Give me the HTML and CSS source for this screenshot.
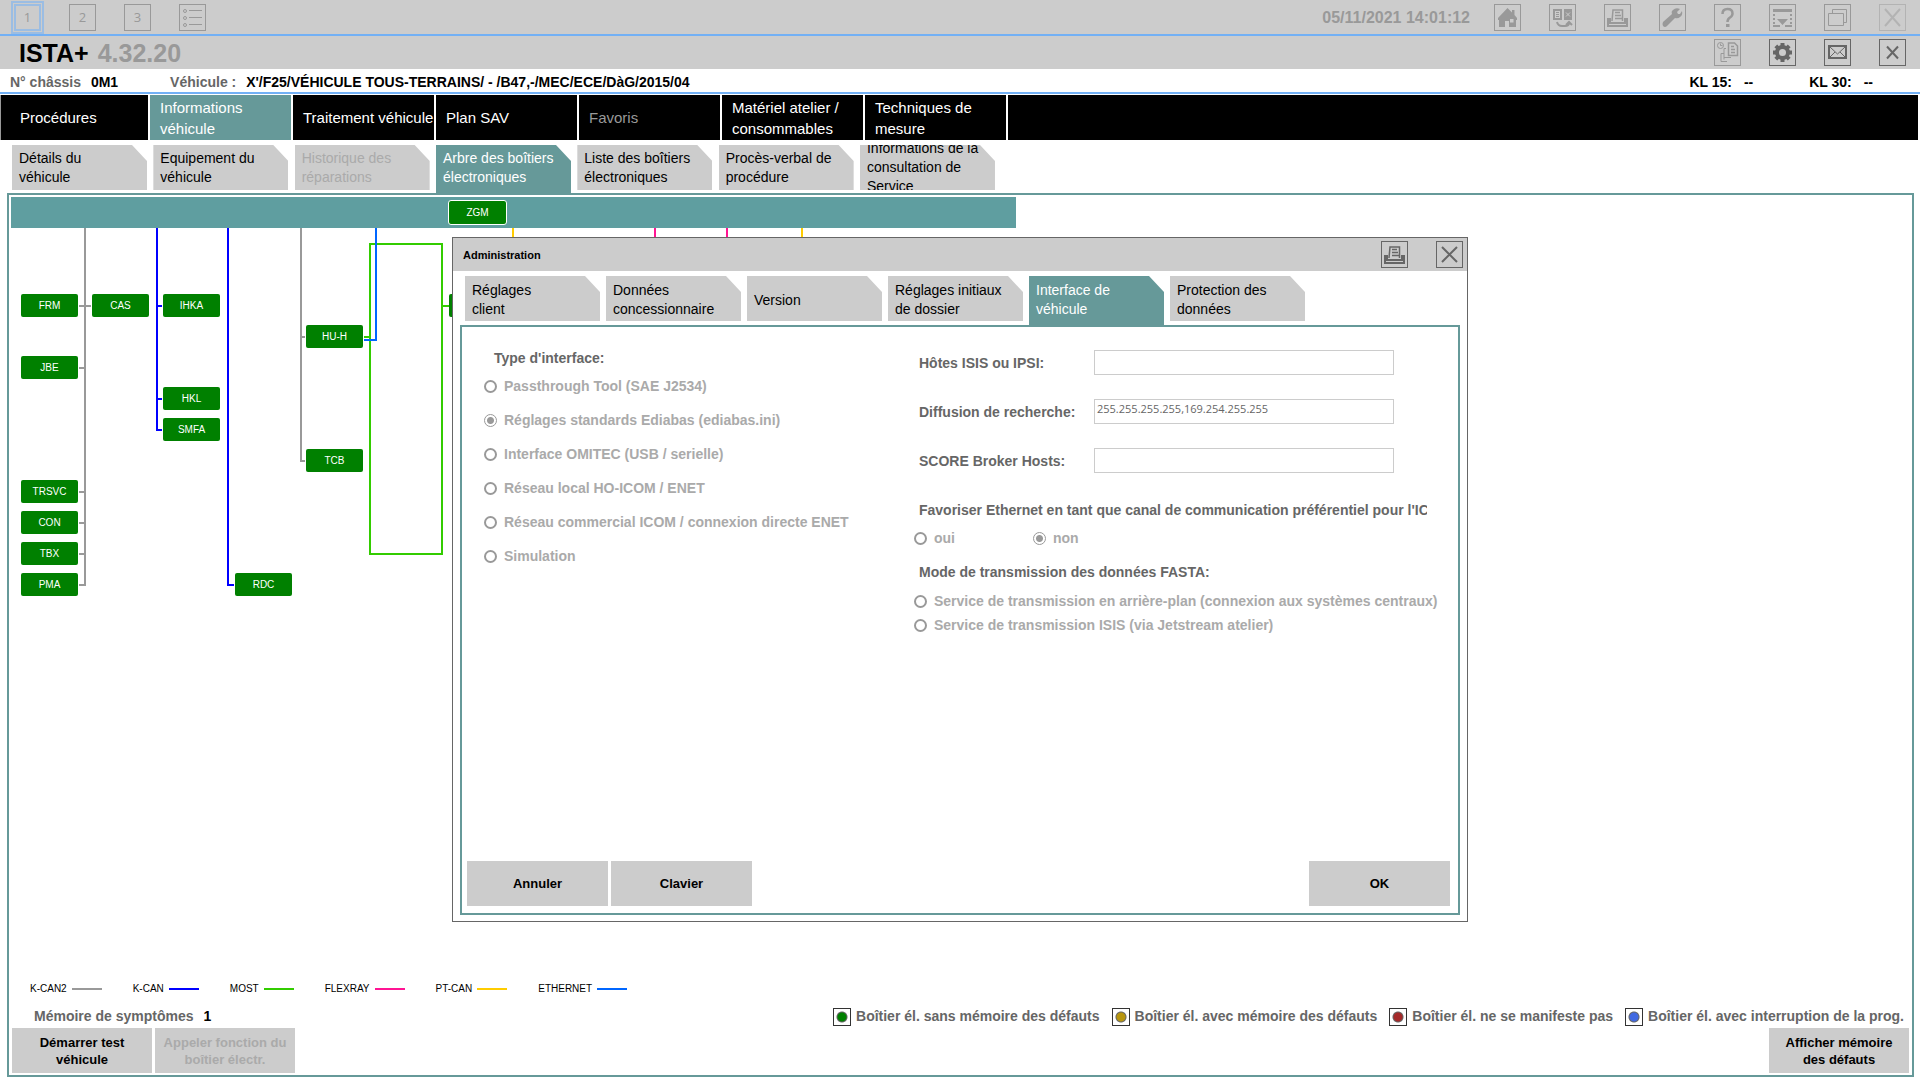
FILE: index.html
```html
<!DOCTYPE html>
<html lang="fr">
<head>
<meta charset="utf-8">
<title>ISTA+ 4.32.20</title>
<link rel="stylesheet" href="styles.css">
</head>
<body>
<header class="topbar">
  <div class="session-slots">
    <button class="icon-button slot slot-active" type="button">1</button>
    <button class="icon-button slot" type="button">2</button>
    <button class="icon-button slot" type="button">3</button>
    <button class="icon-button" type="button" aria-label="Liste">
      <svg viewBox="0 0 27 27"><g fill="none" stroke="currentColor"><circle cx="6" cy="7" r="1.5"/><circle cx="6" cy="14" r="1.5"/><circle cx="6" cy="21" r="1.5"/><path d="M10 6.500H23M10 13.500H23M10 20.500H23"/></g></svg>
    </button>
  </div>
  <div class="tools">
    <time class="clock" datetime="2021-11-05T14:01:12">05/11/2021 14:01:12</time>
    <div class="tool-icons">
      <button class="icon-button" type="button" aria-label="Accueil">
        <svg viewBox="0 0 27 27"><path fill="currentColor" fill-rule="evenodd" d="M13.500 4L18 8.500V6h2.500v5L23 14v2h-1v7h-7v-6h-4v6H5v-7H4v-2zM16 15v3.500h3.500V15z"/></svg>
      </button>
      <button class="icon-button" type="button" aria-label="Échange">
        <svg viewBox="0 0 27 27"><path fill="currentColor" d="M15 5h8v11h-8z"/><path fill="none" stroke="currentColor" stroke-width="2" d="M5 6h7v9H5z"/><path fill="none" stroke="currentColor" d="M7 8.500h3M7 10.500h3M7 12.500h3"/><path fill="none" stroke="#ccc" d="M17 8.500l4 4m0-4l-4 4"/><path fill="none" stroke="currentColor" stroke-width="2" d="M8 18q1 4 5 4h3q4 0 4-3M17 21l3-3 3 3"/></svg>
      </button>
      <button class="icon-button" type="button" aria-label="Imprimer">
        <svg viewBox="0 0 27 27"><path fill="currentColor" d="M3 14h4v4h13v-4h4v9H3z"/><path fill="none" stroke="currentColor" stroke-width="1.500" d="M8 17l1-11h9.500v11M11 8.500h5M11 11.500h6M11 14.500h7"/><path stroke="#ccc" d="M5 20.500h17"/></svg>
      </button>
      <button class="icon-button" type="button" aria-label="Réglages">
        <svg viewBox="0 0 27 27"><path fill="currentColor" d="M22 5l-3 3 1 2 2 0 2-3q1 4-2 6-2 2-5 1l-8 8q-2 2-4 0-1-2 0-4l9-8q-1-3 1-4 3-3 7-1z" transform="translate(-1)"/></svg>
      </button>
      <button class="icon-button" type="button" aria-label="Aide">
        <svg viewBox="0 0 27 27"><path fill="none" stroke="currentColor" stroke-width="2.500" d="M8.500 10q0-5 5-5t5 4.500q0 2.500-2.500 4-2.500 1.500-2.500 4.500"/><path fill="currentColor" d="M12 20h3.500v3H12z"/></svg>
      </button>
      <button class="icon-button" type="button" aria-label="Réduire">
        <svg viewBox="0 0 27 27"><path fill="currentColor" d="M4 5h19v3H4zM8 15h11l-5.500 6zM4 21h7v2H4zM16 21h7v2h-7z"/><path fill="none" stroke="currentColor" stroke-width="2" stroke-dasharray="2 2" d="M5 10v10M22 10v10"/></svg>
      </button>
      <button class="icon-button" type="button" aria-label="Fenêtres">
        <svg viewBox="0 0 27 27"><path fill="none" stroke="currentColor" d="M4.500 9.500h15v12h-15zM8.500 9V5.500h14v13h-3"/></svg>
      </button>
      <button class="icon-button icon-faint" type="button" aria-label="Quitter">
        <svg viewBox="0 0 27 27"><path fill="none" stroke="currentColor" stroke-width="2" d="M6 5l15 17M21 5L6 22"/></svg>
      </button>
    </div>
  </div>
</header>

<div class="titlebar">
  <h1 class="product">ISTA+ <span class="version">4.32.20</span></h1>
  <div class="tool-icons">
    <button class="icon-button" type="button" aria-label="Historique">
      <svg viewBox="0 0 27 27"><g fill="none" stroke="currentColor"><circle cx="6.500" cy="6.500" r="3"/><path d="M6.500 4.500v2h2M12 9.500h-2v11M10 18.500h7M7 14.500v8h6M10 14.500H7"/><path stroke-width="1.500" d="M14.500 4h6l3 3v9.500h-9zM17 7.500h3M17 10.500h4M17 13.500h4"/></g></svg>
    </button>
    <button class="icon-button icon-dark" type="button" aria-label="Administration">
      <svg viewBox="0 0 27 27"><circle cx="13.500" cy="13.500" r="5.500" fill="none" stroke="currentColor" stroke-width="4"/><path stroke="currentColor" stroke-width="4" d="M13.500 4v3M13.500 20v3M4 13.500h3M20 13.500h3M6.800 6.800l2 2M18.200 18.200l2 2M6.800 20.200l2-2M18.200 8.800l2-2"/></svg>
    </button>
    <button class="icon-button icon-dark" type="button" aria-label="Messages">
      <svg viewBox="0 0 27 27"><path fill="none" stroke="currentColor" stroke-width="2" d="M5 7h17v12H5z"/><path fill="none" stroke="currentColor" d="M6 8l7.500 7L21 8M6 18l5-5M21 18l-5-5"/></svg>
    </button>
    <button class="icon-button icon-dark" type="button" aria-label="Fermer">
      <svg viewBox="0 0 27 27"><path fill="none" stroke="currentColor" stroke-width="2" d="M8 7.500l11 12M19 7.500l-11 12"/></svg>
    </button>
  </div>
</div>

<div class="vehicle-bar">
  <div class="vehicle-facts">
    <span>N° châssis <b class="value">0M1</b></span>
    <span>Véhicule : <b class="value">X'/F25/VÉHICULE TOUS-TERRAINS/ - /B47,-/MEC/ECE/DàG/2015/04</b></span>
  </div>
  <div class="terminals"><span>KL 15: <b class="value">--</b></span><span>KL 30: <b class="value">--</b></span></div>
</div>

<nav class="main-nav">
  <a class="main-tab main-tab-first" href="#">Procédures</a>
  <a class="main-tab main-tab-active" href="#">Informations véhicule</a>
  <a class="main-tab main-tab-nowrap" href="#">Traitement véhicule</a>
  <a class="main-tab" href="#">Plan SAV</a>
  <a class="main-tab main-tab-disabled" href="#">Favoris</a>
  <a class="main-tab" href="#">Matériel atelier / consommables</a>
  <a class="main-tab" href="#">Techniques de mesure</a>
  <span class="main-nav-rest"></span>
</nav>

<nav class="tabs page-tabs">
  <a class="tab" href="#"><span>Détails du<br>véhicule</span></a>
  <a class="tab" href="#"><span>Equipement du véhicule</span></a>
  <a class="tab tab-disabled" href="#"><span>Historique des réparations</span></a>
  <a class="tab tab-active" href="#"><span>Arbre des boîtiers électroniques</span></a>
  <a class="tab" href="#"><span>Liste des boîtiers électroniques</span></a>
  <a class="tab" href="#"><span>Procès-verbal de procédure</span></a>
  <a class="tab" href="#"><span>Informations de la consultation de Service</span></a>
</nav>

<main class="panel">
  <div class="tree">
    <svg class="buses" width="1010" height="400" fill="none" stroke-width="2">
      <path stroke="#999" d="M74 31V389M68 109H80M68 171H74M68 295H74M68 326H74M68 357H74M68 388H74M290 31V265M290 140H294M290 264H294"/>
      <path stroke="#00f" d="M146 31V234M146 109H151M146 202H151M146 233H151M217 31V389M217 388H223"/>
      <path stroke="#3c0" d="M359 47H431V357H359ZM353 140H359M431 109H438"/>
      <path stroke="#06f" d="M365 31V143H353"/>
      <path stroke="#fc0" d="M502 31V80M791 31V80"/>
      <path stroke="#ff1493" d="M644 31V80M716 31V80"/>
    </svg>
    <div class="gateway-bar"></div>
    <button class="ecu ecu-gateway" type="button" style="left:437px;top:3px">ZGM</button>
    <button class="ecu" type="button" style="left:10px;top:97px">FRM</button>
    <button class="ecu" type="button" style="left:81px;top:97px">CAS</button>
    <button class="ecu" type="button" style="left:152px;top:97px">IHKA</button>
    <button class="ecu" type="button" style="left:295px;top:128px">HU-H</button>
    <button class="ecu" type="button" style="left:10px;top:159px">JBE</button>
    <button class="ecu" type="button" style="left:152px;top:190px">HKL</button>
    <button class="ecu" type="button" style="left:152px;top:221px">SMFA</button>
    <button class="ecu" type="button" style="left:295px;top:252px">TCB</button>
    <button class="ecu" type="button" style="left:10px;top:283px">TRSVC</button>
    <button class="ecu" type="button" style="left:10px;top:314px">CON</button>
    <button class="ecu" type="button" style="left:10px;top:345px">TBX</button>
    <button class="ecu" type="button" style="left:10px;top:376px">PMA</button>
    <button class="ecu" type="button" style="left:224px;top:376px">RDC</button>
    <button class="ecu" type="button" style="left:438px;top:97px" aria-label="Boîtier MOST"></button>
  </div>

  <ul class="bus-legend">
    <li class="bus bus-kcan2">K-CAN2</li>
    <li class="bus bus-kcan">K-CAN</li>
    <li class="bus bus-most">MOST</li>
    <li class="bus bus-flexray">FLEXRAY</li>
    <li class="bus bus-ptcan">PT-CAN</li>
    <li class="bus bus-ethernet">ETHERNET</li>
  </ul>

  <div class="status-row">
    <span>Mémoire de symptômes <b class="value">1</b></span>
    <ul class="state-legend">
      <li class="state state-ok">Boîtier él. sans mémoire des défauts</li>
      <li class="state state-fault">Boîtier él. avec mémoire des défauts</li>
      <li class="state state-silent">Boîtier él. ne se manifeste pas</li>
      <li class="state state-prog">Boîtier él. avec interruption de la prog.</li>
    </ul>
  </div>

  <div class="actions page-actions">
    <button class="action" type="button">Démarrer test véhicule</button>
    <button class="action" type="button" disabled>Appeler fonction du boîtier électr.</button>
    <button class="action action-end" type="button">Afficher mémoire des défauts</button>
  </div>
</main>

<div class="overlay">
  <section class="dialog" role="dialog" aria-labelledby="dialog-title">
    <header class="dialog-head">
      <h2 class="dialog-title" id="dialog-title">Administration</h2>
      <div class="tool-icons">
        <button class="icon-button icon-dark" type="button" aria-label="Imprimer">
          <svg viewBox="0 0 27 27"><path fill="currentColor" d="M3 14h4v4h13v-4h4v9H3z"/><path fill="none" stroke="currentColor" stroke-width="1.500" d="M8 17l1-11h9.500v11M11 8.500h5M11 11.500h6M11 14.500h7"/><path stroke="#ccc" d="M5 20.500h17"/></svg>
        </button>
        <button class="icon-button icon-dark" type="button" aria-label="Fermer">
          <svg viewBox="0 0 27 27"><path fill="none" stroke="currentColor" stroke-width="2" d="M6 6l15 15M21 6L6 21"/></svg>
        </button>
      </div>
    </header>
    <nav class="tabs dialog-tabs">
      <a class="tab" href="#"><span>Réglages<br>client</span></a>
      <a class="tab" href="#"><span>Données concessionnaire</span></a>
      <a class="tab" href="#"><span>Version</span></a>
      <a class="tab" href="#"><span>Réglages initiaux de dossier</span></a>
      <a class="tab tab-active" href="#"><span>Interface de véhicule</span></a>
      <a class="tab" href="#"><span>Protection des données</span></a>
    </nav>
    <form class="dialog-panel">
      <div class="settings">
        <fieldset class="interface-type">
          <legend>Type d'interface:</legend>
          <label class="option"><input type="radio" name="interface" disabled>Passthrough Tool (SAE J2534)</label>
          <label class="option"><input type="radio" name="interface" checked disabled>Réglages standards Ediabas (ediabas.ini)</label>
          <label class="option"><input type="radio" name="interface" disabled>Interface OMITEC (USB / serielle)</label>
          <label class="option"><input type="radio" name="interface" disabled>Réseau local HO-ICOM / ENET</label>
          <label class="option"><input type="radio" name="interface" disabled>Réseau commercial ICOM / connexion directe ENET</label>
          <label class="option"><input type="radio" name="interface" disabled>Simulation</label>
        </fieldset>
        <div class="connection">
          <div class="fields">
            <label for="hosts">Hôtes ISIS ou IPSI:</label>
            <input class="field" id="hosts" type="text">
            <label for="broadcast">Diffusion de recherche:</label>
            <input class="field" id="broadcast" type="text" value="255.255.255.255,169.254.255.255">
            <label for="broker">SCORE Broker Hosts:</label>
            <input class="field" id="broker" type="text">
          </div>
          <fieldset class="ethernet">
            <legend class="clipped">Favoriser Ethernet en tant que canal de communication préférentiel pour l'ICOM</legend>
            <div class="choice-row">
              <label class="option"><input type="radio" name="ethernet" disabled>oui</label>
              <label class="option"><input type="radio" name="ethernet" checked disabled>non</label>
            </div>
          </fieldset>
          <fieldset class="fasta">
            <legend>Mode de transmission des données FASTA:</legend>
            <label class="option"><input type="radio" name="fasta" disabled>Service de transmission en arrière-plan (connexion aux systèmes centraux)</label>
            <label class="option"><input type="radio" name="fasta" disabled>Service de transmission ISIS (via Jetstream atelier)</label>
          </fieldset>
        </div>
      </div>
      <div class="actions">
        <button class="action" type="button">Annuler</button>
        <button class="action" type="button">Clavier</button>
        <button class="action action-end" type="button">OK</button>
      </div>
    </form>
  </section>
</div>
</body>
</html>
```
FILE: styles.css
```css
* { box-sizing: border-box; }

body {
  margin: 0;
  min-height: 100vh;
  display: flex;
  flex-direction: column;
  position: relative;
  background: #fff;
  color: #000;
  font: 14px/19px "Liberation Sans", Arial, sans-serif;
}

a { color: inherit; text-decoration: none; }
button, input { font: inherit; }
ul { list-style: none; margin: 0; padding: 0; }
fieldset { border: 0; margin: 0; padding: 0; min-width: 0; }
legend { padding: 0; }

/* Top bars */
.topbar, .titlebar {
  display: flex;
  justify-content: space-between;
  align-items: center;
  background: #ccc;
  padding-right: 14px;
}
.topbar { height: 36px; border-bottom: 2px solid #72b0f5; }
.titlebar { height: 33px; padding-left: 19px; }

.session-slots, .tool-icons { display: flex; align-items: center; gap: 28px; }
.session-slots { padding-left: 14px; }
.tools { display: flex; align-items: center; gap: 24px; }
.clock { color: #999; font-size: 16px; font-weight: bold; }

.icon-button {
  width: 27px;
  height: 27px;
  padding: 0;
  flex: none;
  border: 1px solid currentColor;
  background: none;
  color: #999;
}
.icon-button svg { display: block; width: 27px; height: 27px; margin: -1px; }
.icon-dark { color: #666; }
.icon-faint { color: #b3b3b3; }
.slot { font: 13px/16px "Open Sans", sans-serif; }
.slot-active { border: 2px solid #9bbde3; outline: 2px solid #9bbde3; outline-offset: 1px; }

.product { margin: 0; padding-top: 2px; font-size: 25px; line-height: 31px; font-weight: bold; }
.version { color: #999; margin-left: 2px; }

.vehicle-bar {
  height: 25px;
  display: flex;
  justify-content: space-between;
  align-items: center;
  padding: 4px 47px 0 10px;
  border-bottom: 2px solid #72b0f5;
  margin-bottom: 1px;
  color: #666;
  font-size: 14px;
  font-weight: bold;
}
.vehicle-facts { display: flex; gap: 52px; }
.value { color: #000; margin-left: 6px; }
.terminals { display: flex; gap: 56px; color: #000; }
.terminals .value { margin-left: 8px; }

/* Main navigation */
.main-nav { display: flex; gap: 2px; height: 45px; padding-right: 2px; }
.main-tab {
  width: 141px;
  flex: none;
  display: flex;
  align-items: center;
  padding: 0 10px;
  background: #000;
  color: #fff;
  font-size: 15px;
  line-height: 21px;
}
.main-tab-first { width: 148px; padding-left: 19px; border-left: 1px solid #999; }
.main-tab-active { background: #699; }
.main-tab-nowrap { white-space: nowrap; padding-right: 0; }
.main-tab-disabled { color: #999; }
.main-nav-rest { flex: 1; background: #000; }

/* Corner-cut tabs */
.tabs { display: flex; height: 49px; }
.page-tabs { width: 983px; justify-content: space-between; margin: 4px 0 0 12px; padding-top: 1px; }
.tab {
  width: 135px;
  height: 45px;
  display: flex;
  align-items: center;
  overflow: hidden;
  padding: 0 7px;
  background: #ccc;
  clip-path: polygon(0 0, 120px 0, 100% 16px, 100% 100%, 0 100%);
}
.tab-active { height: 49px; padding-bottom: 4px; background: #699; color: #fff; }
.tab-disabled { color: #aaa; }

/* Control unit tree */
.panel {
  flex: 1;
  display: flex;
  flex-direction: column;
  margin: 0 6px 3px 7px;
  border: 2px solid #699;
  padding: 2px;
}
.tree { position: relative; flex: 1; min-height: 400px; }
.gateway-bar { width: 1005px; max-width: 100%; height: 31px; background: #5f9ea0; }
.buses { position: absolute; left: 0; top: 0; }
.ecu {
  position: absolute;
  width: 57px;
  height: 23px;
  padding: 0;
  border: 0;
  border-radius: 2px;
  background: #008000;
  color: #fff;
  font-size: 10px;
  line-height: 23px;
}
.ecu-gateway { width: 59px; height: 25px; border: 1px solid #fff; border-radius: 3px; }

.bus-legend { display: flex; gap: 31px; padding: 0 19px; font-size: 10px; line-height: 12px; }
.bus { display: flex; align-items: center; gap: 5px; }
.bus::after { content: ""; width: 30px; height: 2px; background: currentColor; }
.bus-kcan2::after { background: #999; }
.bus-kcan::after { background: #00f; }
.bus-most::after { background: #3c0; }
.bus-flexray::after { background: #ff1493; }
.bus-ptcan::after { background: #fc0; }
.bus-ethernet::after { background: #06f; }

.status-row {
  display: flex;
  justify-content: space-between;
  align-items: center;
  padding: 12px 6px 2px 23px;
  color: #666;
  font-weight: bold;
}
.state-legend { display: flex; gap: 12px; }
.state { display: flex; align-items: center; gap: 5px; }
.state::before {
  content: "";
  width: 16px;
  height: 16px;
  border: 1px solid #333;
  background: radial-gradient(circle, var(--lamp) 4px, #666 5px, #fff 6px);
}
.state-ok { --lamp: #008000; }
.state-fault { --lamp: #b8960f; }
.state-silent { --lamp: #a52a2a; }
.state-prog { --lamp: #4169e1; }

/* Push buttons */
.actions { display: flex; gap: 3px; }
.page-actions { padding: 0 1px; }
.action {
  width: 140px;
  height: 45px;
  padding: 0 6px;
  border: 0;
  background: #ccc;
  color: #000;
  font-size: 13px;
  line-height: 17px;
  font-weight: bold;
}
.action:disabled { color: #aaa; }
.action-end { margin-left: auto; }

/* Administration dialog */
.overlay {
  position: absolute;
  inset: 237px 0 auto;
  display: flex;
  justify-content: center;
  pointer-events: none;
}
.dialog {
  width: 1016px;
  max-width: 100%;
  min-height: 685px;
  display: flex;
  flex-direction: column;
  pointer-events: auto;
  border: 1px solid #666;
  background: #fff;
}
.dialog-head {
  display: flex;
  justify-content: space-between;
  align-items: center;
  height: 33px;
  padding: 0 4px 0 10px;
  background: #ccc;
}
.dialog-title { margin: 0; padding-top: 2px; font-size: 11px; }
.dialog-tabs { gap: 6px; margin: 5px 0 0 12px; }
.dialog-tabs .tab { padding-top: 3px; }
.dialog-panel {
  flex: 1;
  display: flex;
  flex-direction: column;
  margin: 0 7px 6px;
  border: 2px solid #699;
  padding: 0 8px 7px 5px;
  color: #666;
  font-weight: bold;
}
.dialog-panel .action { width: 141px; }
.settings { flex: 1; display: flex; justify-content: space-between; line-height: 20px; }
.interface-type { padding-left: 17px; }
.interface-type legend { padding: 21px 0 8px 10px; }
.interface-type .option { height: 34px; padding-bottom: 14px; }

.option { display: flex; align-items: center; gap: 7px; color: #aaa; white-space: nowrap; }
.option input {
  appearance: none;
  width: 13px;
  height: 13px;
  margin: 0;
  flex: none;
  border: 2px solid #999;
  border-radius: 50%;
}
.option input:checked {
  border-width: 1px;
  background: radial-gradient(circle, #999 3px, #fff 4px);
}

.connection { width: 536px; padding-top: 23px; }
.fields {
  display: grid;
  grid-template-columns: 175px 300px;
  row-gap: 24px;
  align-items: center;
  padding-left: 5px;
}
.field {
  height: 25px;
  width: 100%;
  padding: 0 2px 6px;
  border: 1px solid #ccc;
  background: #fff;
  color: #666;
  font: 11px/18px "Open Sans", sans-serif;
}
.ethernet { margin-top: 27px; }
.ethernet legend, .fasta legend { margin-left: 5px; }
.clipped { width: 508px; overflow: hidden; white-space: nowrap; }
.choice-row { display: flex; gap: 78px; padding-top: 8px; }
.fasta { margin-top: 14px; }
.fasta .option { padding-top: 4px; }
.fasta legend { padding-bottom: 5px; }
```
